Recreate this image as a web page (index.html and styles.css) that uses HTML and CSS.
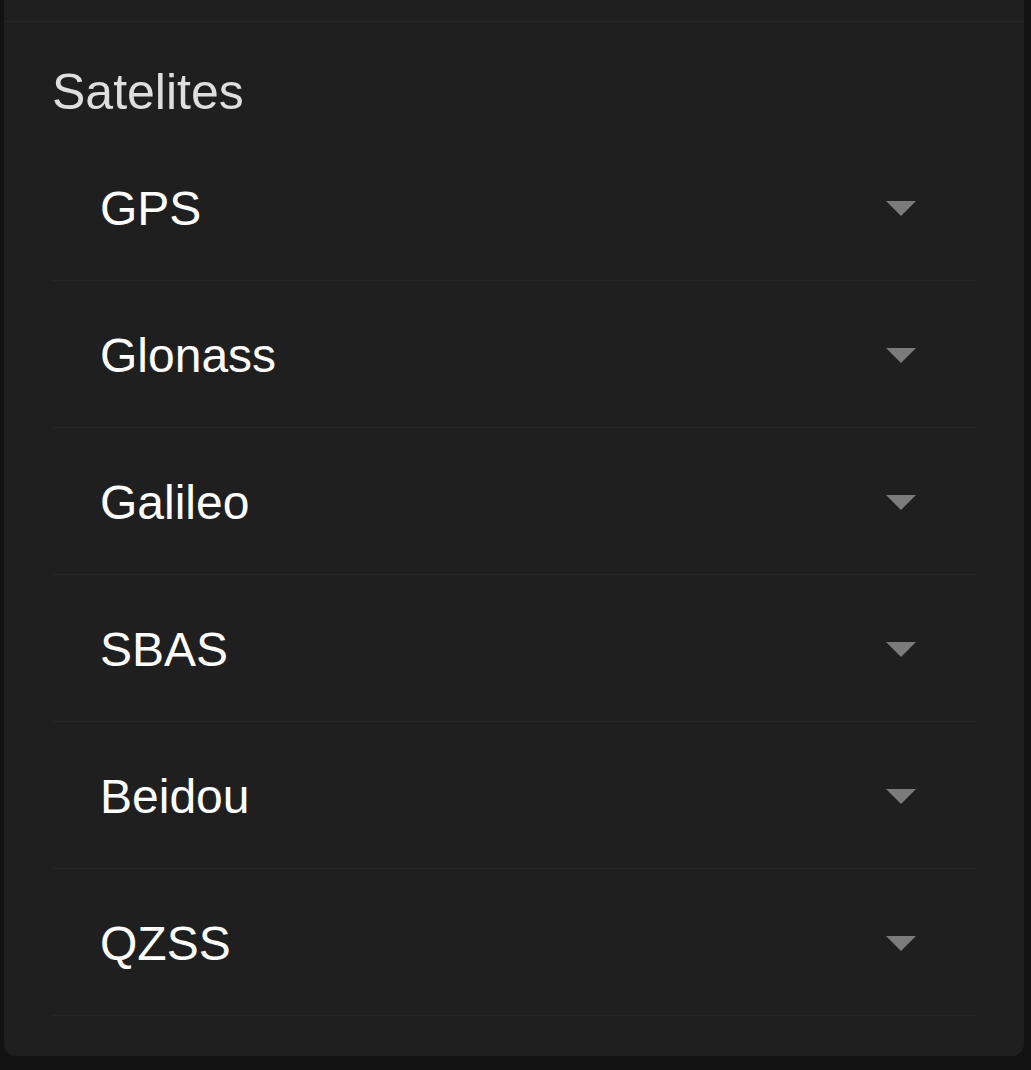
FILE: index.html
```html
<!DOCTYPE html>
<html>
<head>
<meta charset="utf-8">
<link rel="stylesheet" href="styles.css">
</head>
<body>
<div class="card">
  <div class="card-top"></div>
  <div class="section">
    <h2 class="title">Satelites</h2>
    <div class="list">
      <div class="row"><span class="label">GPS</span><span class="caret"></span></div>
      <div class="row"><span class="label">Glonass</span><span class="caret"></span></div>
      <div class="row"><span class="label">Galileo</span><span class="caret"></span></div>
      <div class="row"><span class="label">SBAS</span><span class="caret"></span></div>
      <div class="row"><span class="label">Beidou</span><span class="caret"></span></div>
      <div class="row"><span class="label">QZSS</span><span class="caret"></span></div>
    </div>
  </div>
</div>
</body>
</html>
```
FILE: styles.css
```css
html, body {
  margin: 0;
  padding: 0;
  background: #121212;
  font-family: "Liberation Sans", Arial, sans-serif;
  height: 1070px;
  overflow: hidden;
}
.card {
  margin-left: 4px;
  width: 1020px;
  background: #1f1f1f;
  border-radius: 0 0 12px 12px;
  padding-bottom: 40px;
}
.card-top {
  height: 21px;
  border-bottom: 1px solid #272727;
}
.section {
  padding: 0 48px 0 48px;
}
.title {
  margin: 0;
  padding: 42px 0 13px 0;
  font-size: 50px;
  font-weight: normal;
  color: #dedede;
  line-height: 57px;
}
.list {
  display: flex;
  flex-direction: column;
}
.row {
  border-bottom: 1px solid #262626;
  display: flex;
  align-items: center;
  justify-content: space-between;
  padding: 2px 60px 0 48px;
  box-sizing: content-box;
  height: 144px;
}
.label {
  color: #ffffff;
  font-size: 48px;
  line-height: 55px;
}
.caret {
  width: 0;
  height: 0;
  border-left: 15px solid transparent;
  border-right: 15px solid transparent;
  border-top: 15px solid #7b7b7b;
  margin-bottom: 0;
}
```
